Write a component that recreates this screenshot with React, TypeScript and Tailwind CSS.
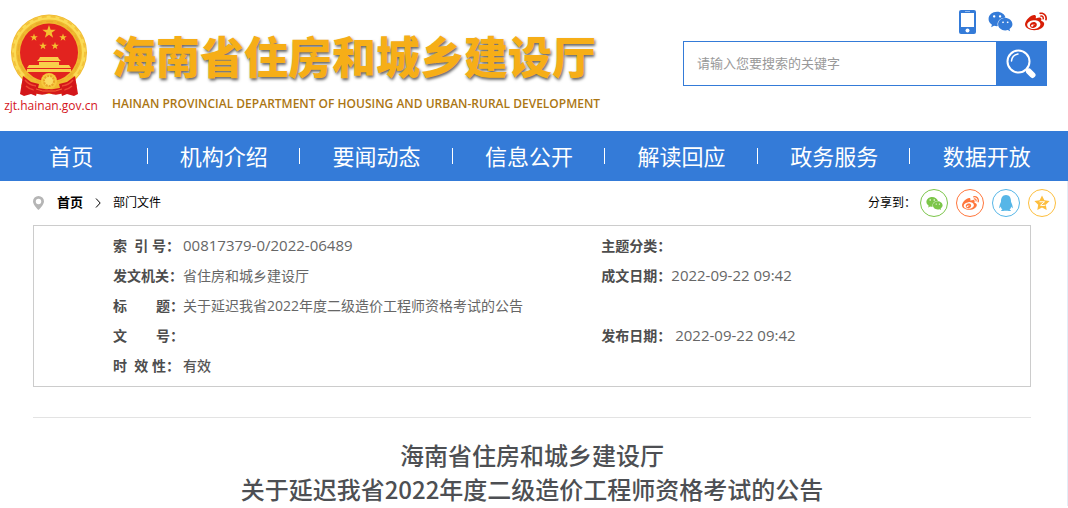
import { useState } from 'react';
import type { ReactNode } from 'react';
import { FaQq, FaWeibo, FaWeixin } from 'react-icons/fa';

const navItems = ['首页', '机构介绍', '要闻动态', '信息公开', '解读回应', '政务服务', '数据开放'];

interface InfoRow {
    label: string;
    value: string;
    label2?: string;
    value2?: string;
}

const infoRows: InfoRow[] = [
    { label: '索\u00a0\u00a0引\u00a0号：', value: '00817379-0/2022-06489', label2: '主题分类：', value2: '' },
    { label: '发文机关：', value: '省住房和城乡建设厅', label2: '成文日期：', value2: '2022-09-22 09:42' },
    { label: '标\u00a0\u00a0\u00a0\u00a0\u00a0\u00a0\u00a0\u00a0题：', value: '关于延迟我省2022年度二级造价工程师资格考试的公告' },
    { label: '文\u00a0\u00a0\u00a0\u00a0\u00a0\u00a0\u00a0\u00a0号：', value: '', label2: '发布日期：', value2: '\u00a02022-09-22 09:42' },
    { label: '时\u00a0\u00a0效\u00a0性：', value: '有效' },
];

const starPoints = (cx: number, cy: number, r: number, inner = 0.4) =>
    Array.from({ length: 10 }, (_, i) => {
        const radius = i % 2 ? r * inner : r;
        const a = (Math.PI / 5) * i - Math.PI / 2;
        return `${cx + radius * Math.cos(a)},${cy + radius * Math.sin(a)}`;
    }).join(' ');

function Emblem() {
    return (
        <svg width="80" height="84" viewBox="0 0 80 84" aria-hidden="true">
            <circle cx="38" cy="38.500" r="38" fill="#f0b92f" />
            <circle cx="38" cy="38.500" r="35" fill="none" stroke="#fbdb55" strokeWidth="4" />
            <circle cx="38" cy="38.500" r="36" fill="none" stroke="#f3c23c" strokeWidth="2" strokeDasharray="5 4" />
            <circle cx="38" cy="38.500" r="31" fill="none" stroke="#e9ae2b" strokeWidth="1.5" strokeDasharray="7 4" />
            <circle cx="38" cy="38.500" r="29" fill="#e2231f" />
            <polygon points={starPoints(38, 18, 7)} fill="#f5c030" />
            <polygon points={starPoints(23, 23.5, 4)} fill="#f5c030" />
            <polygon points={starPoints(52, 23.5, 4)} fill="#f5c030" />
            <polygon points={starPoints(32, 32, 4)} fill="#f5c030" />
            <polygon points={starPoints(44, 32, 4)} fill="#f5c030" />
            <path d="M29 43h18l1 2 2 2H26l2-2zM28 48h20v3H28zM18 51h40l2 3H16zM16 55h44v3H16z" fill="#f9cf4b" />
            <path d="M14 60q10 9 24 9t24-9l4 12-8 8H18l-8-8z" fill="#f0b92f" />
            <path d="M12 62l8 6 8 2-3 12-5-2-7 2-4-2zM64 62l-8 6-8 2 3 12 5-2 7 2 4-2z" fill="#d3161a" />
            <path d="M14 66q4 5 11 6M15 72q3 3 8 4M62 66q-4 5-11 6M61 72q-3 3-8 4" fill="none" stroke="#ef4a33" strokeWidth="1.500" />
            <circle cx="38" cy="67" r="8" fill="#f6c83d" />
            <circle cx="38" cy="67" r="5" fill="#fbdc62" stroke="#e9a529" strokeWidth="2" strokeDasharray="2 1" />
            <path d="M22 72q8 4 16 3 8 1 16-3l-1 6q-7 5-15 1-8 4-15-1z" fill="#d51a19" />
            <path d="M25 75q7 3 13 2 6 1 13-2" fill="none" stroke="#f6653a" />
        </svg>
    );
}

function PhoneIcon() {
    return (
        <svg width="17" height="24" viewBox="0 0 17 24" aria-hidden="true">
            <rect width="17" height="24" rx="2" fill="#347bd8" />
            <rect x="2" y="3" width="13" height="14" fill="#fff" />
            <rect x="6" y="1" width="5" height="1" fill="#8fb8ec" />
            <circle cx="8.500" cy="20.500" r="2" fill="#fff" />
        </svg>
    );
}

function SearchIcon() {
    return (
        <svg width="30" height="30" viewBox="0 0 30 30" fill="none" stroke="#fff" aria-hidden="true">
            <circle cx="12.500" cy="12.500" r="11" strokeWidth="2" />
            <path d="M5.500 12q.5-6 6.500-7" strokeWidth="1.500" strokeLinecap="round" />
            <path d="M20.500 20l2 2" strokeWidth="3" />
            <path d="M23 22.500l3.500 3.500" strokeWidth="6" strokeLinecap="round" />
        </svg>
    );
}

function ShareLink({ label, className, children }: { label: string; className: string; children: ReactNode }) {
    return (
        <a href="#" aria-label={label} className={`flex size-7 items-center justify-center rounded-full border ${className}`}>
            {children}
        </a>
    );
}

const valueClass = (value: string) => {
    if (value === '有效') return 'font-medium text-[#555]';
    return /^[\d\-/:\s]+$/.test(value) ? 'text-[15px] text-[#666]' : 'text-[#666]';
};

export default function App() {
    const [keyword, setKeyword] = useState('');

    return (
        <div className="min-h-screen bg-white font-['Open_Sans','Noto_Sans_CJK_SC',sans-serif] text-[#4d4d4d]" lang="zh-CN">
            <header className="flex items-start justify-between pt-[9px] pr-[21px] pb-2 pl-[5px]">
                <a href="#" className="flex gap-[15px]">
                    <div className="flex w-[92px] flex-col items-center pt-[5px]">
                        <Emblem />
                        <span className="text-[12px] leading-[16px] font-medium whitespace-nowrap text-[#d4141b]">zjt.hainan.gov.cn</span>
                    </div>
                    <div className="pt-5">
                        <h1 className="text-[44px] leading-[56px] font-black whitespace-nowrap text-[#f6ae17] [text-shadow:1px_2px_3px_rgba(0,0,0,0.6)]">
                            海南省住房和城乡建设厅
                        </h1>
                        <p className="text-[12px] leading-[38px] font-semibold whitespace-nowrap text-[#ab7613]">
                            HAINAN PROVINCIAL DEPARTMENT OF HOUSING AND URBAN-RURAL DEVELOPMENT
                        </p>
                    </div>
                </a>

                <div className="flex w-[364px] flex-col gap-[7px]">
                    <div className="flex items-center justify-end gap-3">
                        <a href="#" aria-label="手机版"><PhoneIcon /></a>
                        <a href="#" aria-label="微信" className="text-[#347bd8]"><FaWeixin size={25} /></a>
                        <a href="#" aria-label="微博" className="text-[#d81e06]"><FaWeibo size={22} /></a>
                    </div>
                    <form onSubmit={(e) => e.preventDefault()} className="flex h-[45px] border border-[#347bd8]">
                        <input
                            type="text"
                            aria-label="搜索关键字"
                            className="min-w-0 flex-1 px-[13px] text-[13px] text-[#555] placeholder:text-[#999] focus:outline-none"
                            placeholder="请输入您要搜索的关键字"
                            value={keyword}
                            onChange={(e) => setKeyword(e.target.value)}
                        />
                        <button type="submit" aria-label="搜索" className="flex w-[50px] items-center justify-center bg-[#347bd8]">
                            <SearchIcon />
                        </button>
                    </form>
                </div>
            </header>

            <nav className="grid h-[50px] grid-cols-7 bg-[#347bd8] text-[22px] text-white">
                {navItems.map((item, index) => (
                    <div key={item} className="flex items-center pr-[5px]">
                        <a href="#" className="flex-1 pr-1 text-center whitespace-nowrap">{item}</a>
                        <span className={index < navItems.length - 1 ? 'h-4 w-px bg-white' : 'w-px'} />
                    </div>
                ))}
            </nav>

            <main className="border-r border-[#e3edf7]">
                <div className="flex h-11 items-center justify-between pr-[11px] pl-[33px] text-[12px] text-black">
                    <div className="flex items-center">
                        <svg width="11" height="14" viewBox="0 0 11 14" className="mr-[13px]" aria-hidden="true">
                            <path d="M5.500 0A5.500 5.500 0 0 0 0 5.500C0 9 5.500 14 5.500 14S11 9 11 5.500A5.500 5.500 0 0 0 5.500 0z" fill="#b5b5b5" />
                            <circle cx="5.500" cy="5.500" r="2.700" fill="#fff" />
                        </svg>
                        <a href="#" className="text-[13px] font-bold">首页</a>
                        <svg width="6" height="10" viewBox="0 0 6 10" className="mx-3" aria-hidden="true">
                            <path d="M1 .5L5.200 5 1 9.500" fill="none" stroke="#000" />
                        </svg>
                        <a href="#">部门文件</a>
                    </div>
                    <div className="flex items-center gap-1">
                        <span>分享到：</span>
                        <div className="flex gap-2">
                            <ShareLink label="微信" className="border-[#7bc549] text-[#7bc549]"><FaWeixin size={17} /></ShareLink>
                            <ShareLink label="微博" className="border-[#ff763b] text-[#ff763b]"><FaWeibo size={17} /></ShareLink>
                            <ShareLink label="QQ" className="border-[#56b6e7] text-[#56b6e7]"><FaQq size={16} /></ShareLink>
                            <ShareLink label="QQ空间" className="border-[#fdbe3d] text-[#fdbe3d]">
                                <svg width="16" height="16" viewBox="0 0 16 16" aria-hidden="true">
                                    <polygon points={starPoints(8, 8.5, 8, 0.5)} fill="currentColor" />
                                    <path d="M5.500 6.800h5L6.500 10.200q2.500.6 5 0" fill="none" stroke="#fff" />
                                </svg>
                            </ShareLink>
                        </div>
                    </div>
                </div>

                <div className="mr-9 ml-[33px]">
                    <div className="border border-[#ccc] pt-1 pb-1.5">
                        <table className="w-full table-fixed text-left text-[14px]">
                            <colgroup>
                                <col className="w-[149px]" />
                                <col className="w-[42%]" />
                                <col className="w-[70px]" />
                                <col />
                            </colgroup>
                            <tbody>
                                {infoRows.map((row) => (
                                    <tr key={row.label} className="h-[30px]">
                                        <th scope="row" className="pl-[79px] font-bold whitespace-nowrap">{row.label}</th>
                                        <td className={valueClass(row.value)}>{row.value}</td>
                                        {row.label2 && (
                                            <>
                                                <th scope="row" className="font-bold whitespace-nowrap">{row.label2}</th>
                                                <td className={valueClass(row.value2 ?? '')}>{row.value2}</td>
                                            </>
                                        )}
                                    </tr>
                                ))}
                            </tbody>
                        </table>
                    </div>

                    <h2 className="mt-[30px] border-t border-[#e3e3e3] pt-5 text-center font-['Noto_Sans_CJK_SC',sans-serif] text-[24px] leading-[34px] font-medium text-[#4d4f53]">
                        海南省住房和城乡建设厅
                        <br />
                        关于延迟我省2022年度二级造价工程师资格考试的公告
                    </h2>
                </div>
            </main>
        </div>
    );
}
